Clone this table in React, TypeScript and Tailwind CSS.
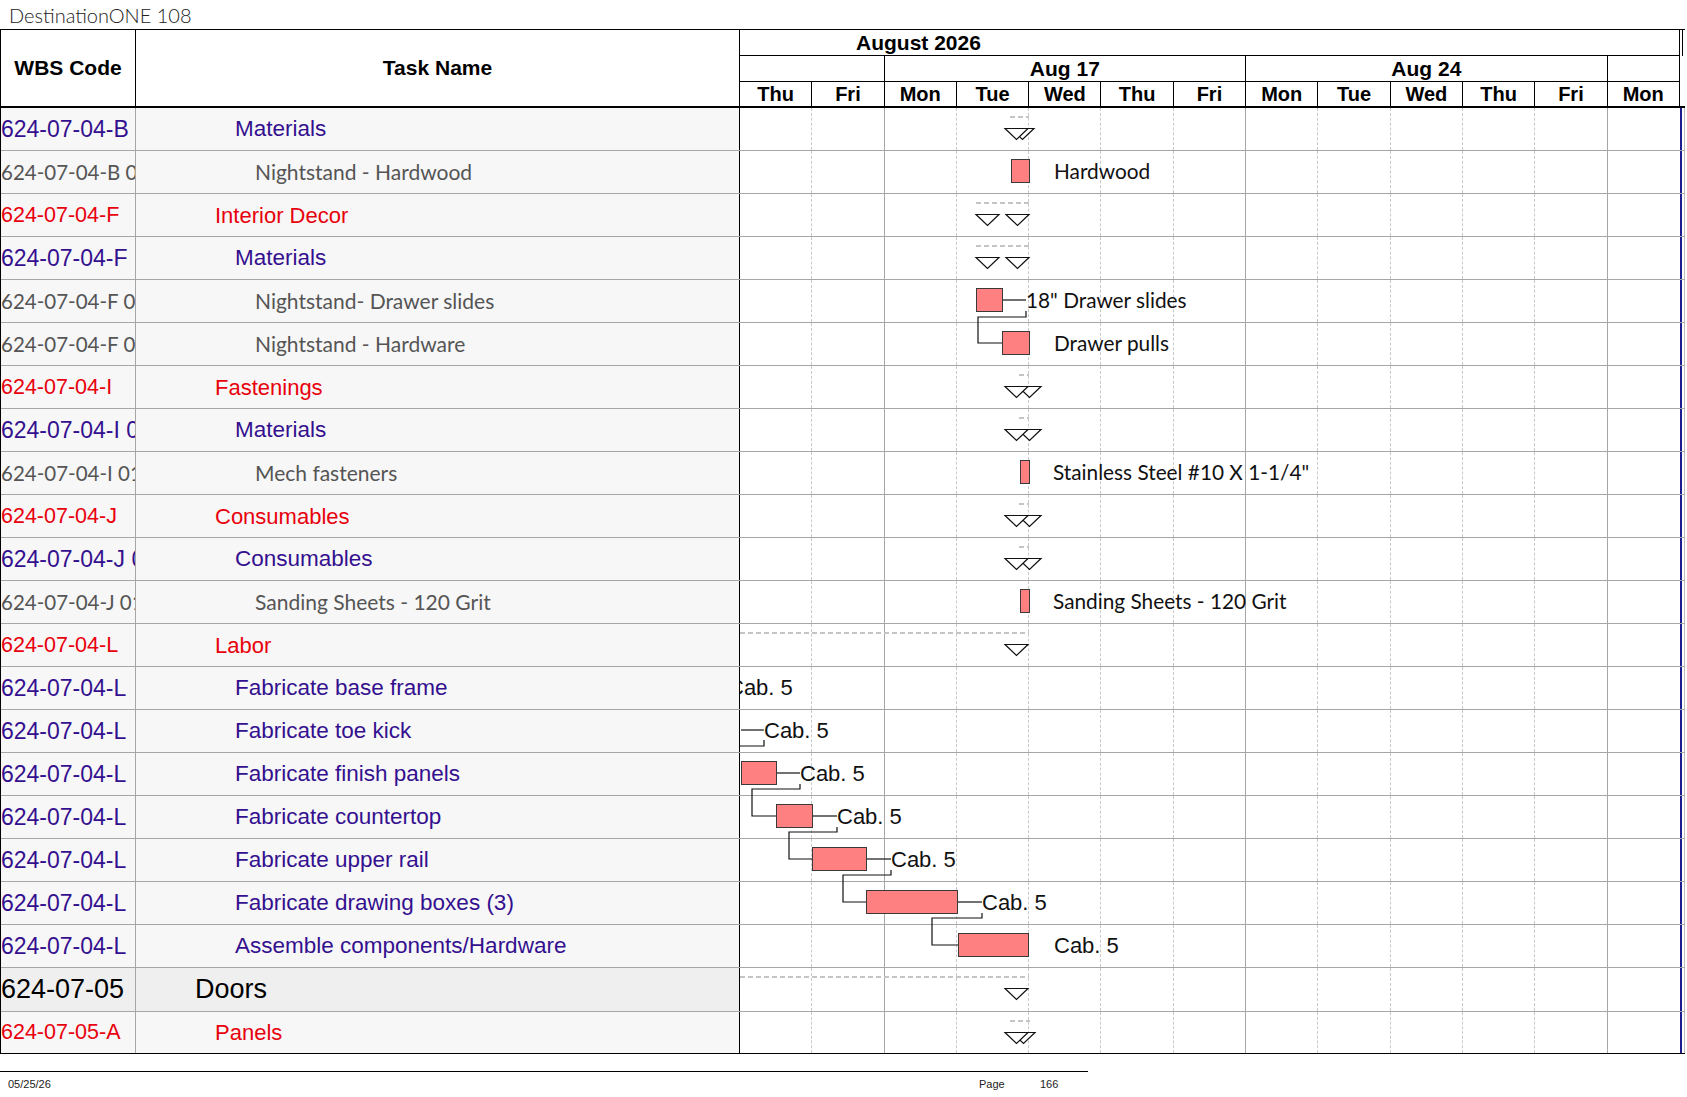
import React from "react";

type Kind = "purple" | "gray" | "red" | "black";

type Row = { wbs: string; name: string; kind: Kind };

const rows: Row[] = [
  { wbs: "624-07-04-B", name: "Materials", kind: "purple" },
  { wbs: "624-07-04-B 01", name: "Nightstand - Hardwood", kind: "gray" },
  { wbs: "624-07-04-F", name: "Interior Decor", kind: "red" },
  { wbs: "624-07-04-F", name: "Materials", kind: "purple" },
  { wbs: "624-07-04-F 01", name: "Nightstand- Drawer slides", kind: "gray" },
  { wbs: "624-07-04-F 02", name: "Nightstand - Hardware", kind: "gray" },
  { wbs: "624-07-04-I", name: "Fastenings", kind: "red" },
  { wbs: "624-07-04-I 01", name: "Materials", kind: "purple" },
  { wbs: "624-07-04-I 01.1", name: "Mech fasteners", kind: "gray" },
  { wbs: "624-07-04-J", name: "Consumables", kind: "red" },
  { wbs: "624-07-04-J 01", name: "Consumables", kind: "purple" },
  { wbs: "624-07-04-J 01.1", name: "Sanding Sheets - 120 Grit", kind: "gray" },
  { wbs: "624-07-04-L", name: "Labor", kind: "red" },
  { wbs: "624-07-04-L", name: "Fabricate base frame", kind: "purple" },
  { wbs: "624-07-04-L", name: "Fabricate toe kick", kind: "purple" },
  { wbs: "624-07-04-L", name: "Fabricate finish panels", kind: "purple" },
  { wbs: "624-07-04-L", name: "Fabricate countertop", kind: "purple" },
  { wbs: "624-07-04-L", name: "Fabricate upper rail", kind: "purple" },
  { wbs: "624-07-04-L", name: "Fabricate drawing boxes (3)", kind: "purple" },
  { wbs: "624-07-04-L", name: "Assemble components/Hardware", kind: "purple" },
  { wbs: "624-07-05", name: "Doors", kind: "black" },
  { wbs: "624-07-05-A", name: "Panels", kind: "red" },
];

const wbsStyle: Record<Kind, string> = {
  purple: "font-['Liberation_Sans',Arial,sans-serif] text-[23px] text-[#34108f]",
  gray: "font-['Lato',sans-serif] text-[20.5px] text-[#555555]",
  red: "font-['Liberation_Sans',Arial,sans-serif] text-[21.5px] text-[#e8000c]",
  black: "font-['Liberation_Sans',Arial,sans-serif] text-[27px] text-black",
};

const nameStyle: Record<Kind, string> = {
  purple: "pl-[99px] font-['Liberation_Sans',Arial,sans-serif] text-[22.5px] text-[#34108f]",
  gray: "pl-[119px] font-['Lato',sans-serif] text-[21px] text-[#555555]",
  red: "pl-[79px] font-['Liberation_Sans',Arial,sans-serif] text-[22px] text-[#e8000c]",
  black: "pl-[59px] font-['Liberation_Sans',Arial,sans-serif] text-[27px] text-black",
};

const days = ["Thu", "Fri", "Mon", "Tue", "Wed", "Thu", "Fri", "Mon", "Tue", "Wed", "Thu", "Fri", "Mon"];

// grid line after each day column: solid before a Monday, dashed otherwise
function dayLine(i: number) {
  if (i === 12) return "h-full";
  if (i === 1 || i === 6 || i === 11) return "h-full border-r border-[#a6a6a6]";
  return "h-full border-r border-dashed border-[#c9c9c9]";
}

function rowTop(i: number) {
  if (i <= 20) return 108 + 43 * i;
  return 1012;
}

const summaries: { row: number; dash: [number, number]; tris: number[] }[] = [
  { row: 0, dash: [1010, 1029], tris: [1011, 1005] },
  { row: 2, dash: [976, 1029], tris: [1006, 976] },
  { row: 3, dash: [976, 1029], tris: [1006, 976] },
  { row: 6, dash: [1019, 1029], tris: [1018, 1005] },
  { row: 7, dash: [1019, 1029], tris: [1018, 1005] },
  { row: 9, dash: [1019, 1029], tris: [1018, 1005] },
  { row: 10, dash: [1019, 1029], tris: [1018, 1005] },
  { row: 12, dash: [740, 1029], tris: [1005] },
  { row: 20, dash: [740, 1029], tris: [1005] },
  { row: 21, dash: [1010, 1030], tris: [1012, 1005] },
];

const bars: { row: number; x1: number; x2: number }[] = [
  { row: 1, x1: 1011, x2: 1029 },
  { row: 4, x1: 976, x2: 1002 },
  { row: 5, x1: 1002, x2: 1029 },
  { row: 8, x1: 1020, x2: 1029 },
  { row: 11, x1: 1020, x2: 1029 },
  { row: 15, x1: 741, x2: 776 },
  { row: 16, x1: 776, x2: 812 },
  { row: 17, x1: 812, x2: 866 },
  { row: 18, x1: 866, x2: 957 },
  { row: 19, x1: 958, x2: 1028 },
];

const labels: { row: number; x: number; text: string; from?: number; cab?: boolean }[] = [
  { row: 1, x: 1054, text: "Hardwood" },
  { row: 4, x: 1026, text: "18\" Drawer slides", from: 1002 },
  { row: 5, x: 1054, text: "Drawer pulls" },
  { row: 8, x: 1053, text: "Stainless Steel #10 X 1-1/4\"" },
  { row: 11, x: 1053, text: "Sanding Sheets - 120 Grit" },
  { row: 13, x: 728, text: "Cab. 5", cab: true },
  { row: 14, x: 764, text: "Cab. 5", from: 741, cab: true },
  { row: 15, x: 800, text: "Cab. 5", from: 776, cab: true },
  { row: 16, x: 837, text: "Cab. 5", from: 812, cab: true },
  { row: 17, x: 891, text: "Cab. 5", from: 866, cab: true },
  { row: 18, x: 982, text: "Cab. 5", from: 957, cab: true },
  { row: 19, x: 1054, text: "Cab. 5", cab: true },
];

const links = [
  "M1026,311 V317 H978 V343 H1002",
  "M764,740 V746 H740",
  "M800,784 V789 H752 V816 H776",
  "M837,827 V832 H789 V859 H812",
  "M891,870 V875 H843 V902 H866",
  "M982,913 V918 H932 V945 H958",
];

function Tri({ x, y }: { x: number; y: number }) {
  return (
    <polygon
      points={`${x},${y} ${x + 23},${y} ${x + 11.5},${y + 11}`}
      fill="white"
      stroke="#111"
      strokeWidth={1.2}
    />
  );
}

function GanttOverlay() {
  return (
    <svg className="absolute left-[739px] top-0" width={941} height={946}>
      <g transform="translate(-740 -108)">
        {summaries.map((s) => {
          const t = rowTop(s.row);
          return (
            <g key={s.row}>
              <line
                x1={s.dash[0]}
                x2={s.dash[1]}
                y1={t + 9}
                y2={t + 9}
                stroke="#c4c4c4"
                strokeWidth={2}
                strokeDasharray="5 3"
              />
              {s.tris.map((x) => (
                <Tri key={x} x={x} y={t + 20.5} />
              ))}
            </g>
          );
        })}

        {links.map((d) => (
          <path key={d} d={d} fill="none" stroke="#111" strokeWidth={1.2} />
        ))}

        {labels.map((l) => {
          const t = rowTop(l.row);
          return (
            <g key={l.row}>
              {l.from !== undefined && (
                <line x1={l.from} x2={l.x} y1={t + 20} y2={t + 20} stroke="#111" strokeWidth={1.2} />
              )}
              <text
                x={l.x}
                y={t + 28}
                fill="#111"
                fontSize={l.cab ? 22 : 20.8}
                fontFamily={l.cab ? "'Liberation Sans', Arial, sans-serif" : "Lato, sans-serif"}
              >
                {l.text}
              </text>
            </g>
          );
        })}

        {bars.map((b) => {
          const t = rowTop(b.row);
          return (
            <rect
              key={b.row}
              x={b.x1 + 0.5}
              y={t + 8.5}
              width={b.x2 - b.x1}
              height={23}
              fill="#ff8080"
              stroke="#3a3a3a"
              strokeWidth={1}
            />
          );
        })}
      </g>
    </svg>
  );
}

function Header() {
  return (
    <div className="flex h-[79px] border-t border-b-2 border-black font-['Liberation_Sans',Arial,sans-serif] font-bold text-black">
      <div className="flex w-[135px] shrink-0 items-center justify-center border-r border-black text-[21px]">
        WBS Code
      </div>
      <div className="flex w-[604px] shrink-0 items-center justify-center border-r border-black text-[21px]">
        Task Name
      </div>
      <div className="flex w-[940px] shrink-0 flex-col">
        <div className="flex h-[26px] items-center border-r border-b border-black pl-[116px] text-[21px] leading-none">
          August 2026
        </div>
        <div className="grid h-[26px] grid-cols-[repeat(13,72.3px)] border-b border-black text-[21px] leading-none">
          <div className="col-span-2 border-r border-black" />
          <div className="col-span-5 flex items-center justify-center border-r border-black">Aug 17</div>
          <div className="col-span-5 flex items-center justify-center border-r border-black">Aug 24</div>
          <div className="col-span-1 border-r border-black" />
        </div>
        <div className="grid h-[24px] grid-cols-[repeat(13,72.3px)] text-[20px] leading-none">
          {days.map((d, i) => (
            <div key={i} className="flex items-center justify-center border-r border-black">
              {d}
            </div>
          ))}
        </div>
      </div>
      <div className="w-[5px] shrink-0">
        <div className="h-[26px] w-[3px] border-r border-black" />
      </div>
    </div>
  );
}

function BodyRow({ row, index }: { row: Row; index: number }) {
  const isDoors = row.kind === "black";
  const isLast = index === rows.length - 1;
  const height = isDoors ? "h-[44px]" : isLast ? "h-[42px]" : "h-[43px]";
  const line = isLast ? "border-black" : "border-[#a6a6a6]";
  const fill = isDoors ? "bg-[#efefef]" : "bg-[#f7f7f7]";
  return (
    <div className={`flex border-b ${height} ${line}`}>
      <div
        className={`flex w-[135px] shrink-0 items-center overflow-hidden whitespace-nowrap border-r border-[#a6a6a6] ${fill} ${wbsStyle[row.kind]}`}
      >
        {row.wbs}
      </div>
      <div
        className={`flex w-[604px] shrink-0 items-center overflow-hidden whitespace-nowrap border-r border-black ${fill} ${nameStyle[row.kind]}`}
      >
        {row.name}
      </div>
      <div className="grid w-[940px] shrink-0 grid-cols-[repeat(13,72.3px)] bg-white">
        {days.map((_, i) => (
          <div key={i} className={dayLine(i)} />
        ))}
      </div>
      <div className="w-[2px] shrink-0 bg-[#1c1c8f]" />
      <div className="w-[3px] shrink-0 border-r border-[#bdbdbd] bg-white" />
    </div>
  );
}

export default function App() {
  return (
    <div className="relative h-[1097px] w-[1687px] overflow-hidden bg-white">
      <div className="flex h-[29px] items-center pl-[9px] font-['Lato',sans-serif] text-[20px] font-light text-[#222]">
        DestinationONE 108
      </div>

      <div className="w-[1685px] border-l border-black">
        <Header />
        <div className="relative">
          {rows.map((row, i) => (
            <BodyRow key={i} row={row} index={i} />
          ))}
          <GanttOverlay />
        </div>
      </div>

      <div className="mt-[17px] flex w-[1088px] border-t-[1.5px] border-black pt-[7px] font-['Liberation_Sans',Arial,sans-serif] text-[11px] leading-[11px] text-[#222]">
        <span className="w-[979px] pl-[8px]">05/25/26</span>
        <span className="w-[61px]">Page</span>
        <span>166</span>
      </div>
    </div>
  );
}
